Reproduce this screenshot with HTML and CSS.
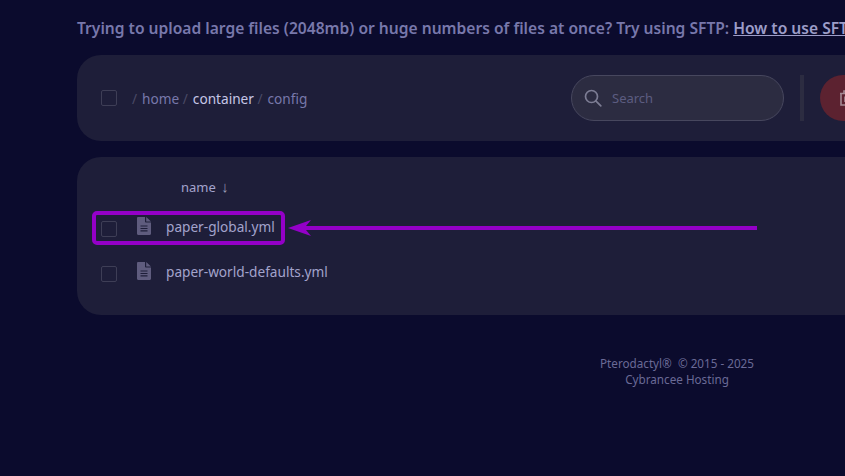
FILE: index.html
```html
<!DOCTYPE html>
<html>
<head>
    <title>File Manager</title>
    <link rel="stylesheet" href="styles.css">
</head>
<body>
    <div class="page">
        <p class="sftp-note">Trying to upload large files (2048mb) or huge numbers of files at once? Try using SFTP: <a href="#">How to use SFTP</a></p>

        <div class="panel toolbar">
            <span class="check"></span>
            <div class="crumbs">
                <span class="sep">/</span><span class="crumb">home</span>
                <span class="sep">/</span><span class="crumb current">container</span>
                <span class="sep">/</span><span class="crumb">config</span>
            </div>
            <div class="search">
                <svg class="search-icon" viewBox="0 0 18 18" width="18" height="18" fill="none" stroke="#7d7d94" stroke-width="1.7" stroke-linecap="round">
                    <circle cx="7.500" cy="7.500" r="6"/>
                    <path d="M11.800 11.800L16.800 16.800"/>
                </svg>
                <span class="search-text">Search</span>
            </div>
            <span class="divider"></span>
            <button class="delete-btn">
                <svg viewBox="0 0 16 16" width="16" height="16" fill="none" stroke="#a58a94" stroke-width="1.6">
                    <path d="M5 3V1h6v2M1 3.500h14M2 3.500V15h12V3.500M6 6.500v5.500M10 6.500v5.500"/>
                </svg>
            </button>
        </div>

        <div class="panel files">
            <div class="files-head">name <span class="sort">↓</span></div>
            <div class="file-row">
                <span class="check"></span>
                <svg class="file-icon" viewBox="0 0 14 18" width="14" height="18"><path fill="#5f5c7e" d="M0 1.2C0 .5.5 0 1.2 0H8v4.500c0 .6.500 1 1 1h5v11.300c0 .7-.5 1.200-1.200 1.200H1.200C.5 18 0 17.500 0 16.800zM9.200 0L14 4.400H9.200zM3.500 8.500v1.100h7V8.500zm0 2.400V12h7v-1.100zm0 2.400v1.100h7v-1.100z" fill-rule="evenodd"/></svg>
                <span class="file-name">paper-global.yml</span>
            </div>
            <div class="file-row">
                <span class="check"></span>
                <svg class="file-icon" viewBox="0 0 14 18" width="14" height="18"><path fill="#5f5c7e" d="M0 1.2C0 .5.5 0 1.2 0H8v4.500c0 .6.500 1 1 1h5v11.300c0 .7-.5 1.200-1.200 1.200H1.200C.5 18 0 17.500 0 16.800zM9.200 0L14 4.400H9.200zM3.500 8.500v1.100h7V8.500zm0 2.400V12h7v-1.100zm0 2.400v1.100h7v-1.100z" fill-rule="evenodd"/></svg>
                <span class="file-name">paper-world-defaults.yml</span>
            </div>
        </div>

        <div class="footer">
            <div>Pterodactyl®&nbsp; © 2015 - 2025</div>
            <div>Cybrancee Hosting</div>
        </div>
    </div>

    <!-- annotation drawn over the screenshot -->
    <div class="mark-box"></div>
    <svg class="mark-arrow" viewBox="0 0 470 16" width="470" height="16">
        <path fill="#9400c8" d="M0 8L23 0L18 6H469V10H18L23 16z"/>
    </svg>
</body>
</html>
```
FILE: styles.css
```css
html, body {
    margin: 0;
    height: 100%;
    overflow: hidden;
    background-color: #0b0b2d;
}
body {
    font-family: "Noto Sans", sans-serif;
    color: #a3a3cc;
    font-size: 13.65px;
}
.page {
    width: 1200px;
    margin-left: 77px;
}
.sftp-note {
    margin: 0;
    padding-top: 18px;
    height: 37px;
    line-height: 21px;
    font-size: 15.6px;
    font-weight: 600;
    color: #7878ab;
    white-space: nowrap;
}
.sftp-note a {
    color: #9d9dc8;
}
.panel {
    background-color: #1e1e39;
    border-radius: 24px;
}
.toolbar {
    height: 86px;
    display: flex;
    align-items: center;
    padding: 0 24px;
    box-sizing: border-box;
}
.check {
    width: 16px;
    height: 16px;
    box-sizing: border-box;
    border: 1px solid #3e3e56;
    border-radius: 2px;
    flex-shrink: 0;
}
.crumbs {
    margin-left: 15px;
    width: 439px;
    flex-shrink: 0;
    color: #7878ab;
    white-space: nowrap;
}
.sep {
    color: #4a4a66;
    margin-right: 5px;
}
.current {
    color: #c6c6e6;
}
.search {
    width: 213px;
    height: 46px;
    box-sizing: border-box;
    flex-shrink: 0;
    display: flex;
    align-items: center;
    padding-left: 12px;
    background-color: #2c2c41;
    border: 1px solid #47475e;
    border-radius: 23px;
}
.search-text {
    margin-left: 10px;
    font-size: 13px;
    color: #5c5c80;
}
.divider {
    width: 4px;
    height: 46px;
    margin-left: 16px;
    flex-shrink: 0;
    background-color: #2c2c41;
}
.delete-btn {
    width: 60px;
    height: 46px;
    margin-left: 16px;
    flex-shrink: 0;
    padding: 0 0 0 19px;
    border: none;
    border-radius: 23px;
    background-color: #5c2230;
    display: flex;
    align-items: center;
}
.files {
    margin-top: 16px;
    height: 158px;
    padding: 19px 24px 0;
    box-sizing: border-box;
}
.files-head {
    margin-left: 80px;
    margin-bottom: 10px;
    height: 20px;
    line-height: 20px;
    font-size: 13px;
    color: #a3a3cc;
}
.sort {
    margin-left: 2px;
    font-size: 15px;
    color: #9a9ab4;
}
.file-row {
    height: 45px;
    display: flex;
    align-items: center;
}
.file-icon {
    margin-left: 20px;
    margin-top: -5px;
    flex-shrink: 0;
}
.file-name {
    margin-left: 15px;
    margin-top: -5px;
    color: #a3a3cc;
}
.footer {
    margin-top: 40px;
    text-align: center;
    font-size: 11.7px;
    line-height: 16px;
    color: #6a6a96;
}
.mark-box {
    position: absolute;
    left: 92px;
    top: 211px;
    width: 193px;
    height: 34px;
    box-sizing: border-box;
    border: 4px solid #9400c8;
    border-radius: 5px;
}
.mark-arrow {
    position: absolute;
    left: 288px;
    top: 220px;
}
```
